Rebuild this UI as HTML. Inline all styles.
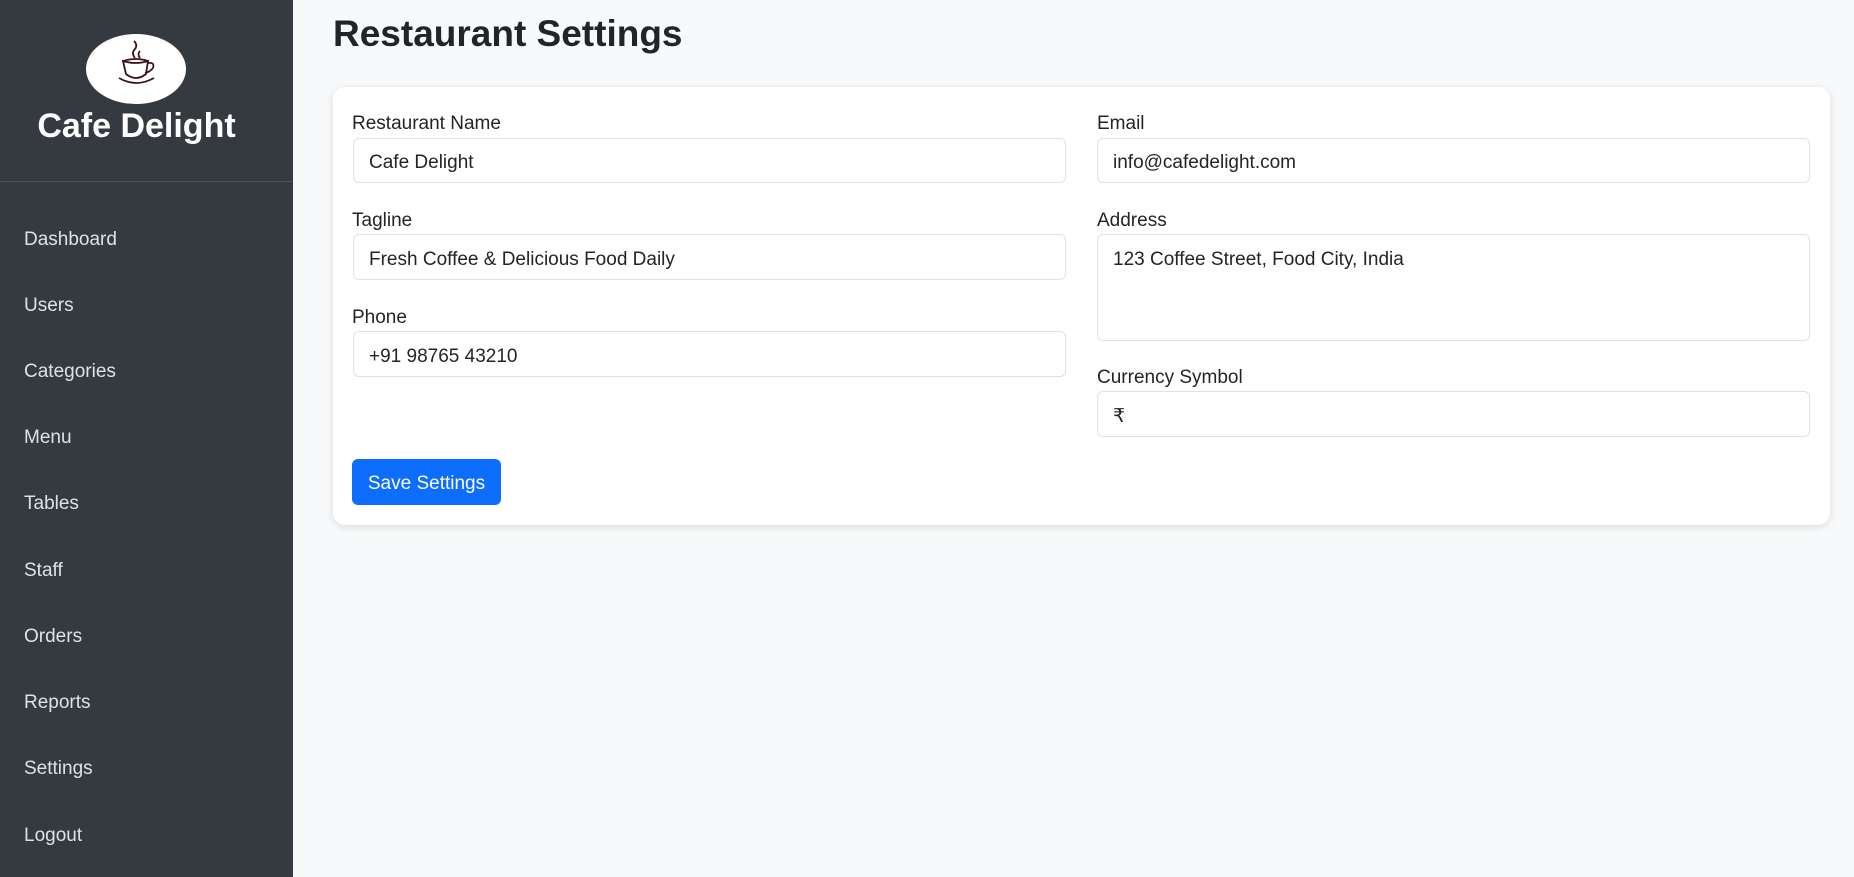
<!DOCTYPE html>
<html><head><meta charset="utf-8"><style>
*{box-sizing:border-box;margin:0;padding:0}
body{width:1854px;height:877px;overflow:hidden;background:#f8f9fa;font-family:"Liberation Sans",sans-serif;color:#212529;position:relative}
.sb{position:absolute;left:0;top:0;width:293px;height:877px;background:#343a40}
.brand{position:absolute;top:107px;left:0;width:273px;text-align:center;color:#fff;font-size:34px;font-weight:bold}
.div{position:absolute;top:181px;left:0;width:293px;height:1px;background:#4b5157}
.nav{position:absolute;left:24px;color:#dee2e6;font-size:19px;transform:translateY(-50%)}
h1{position:absolute;left:333px;top:13px;font-size:37px;font-weight:bold}
.card{position:absolute;left:333px;top:87px;width:1497px;height:438px;background:#fff;border-radius:12px;box-shadow:0 2px 8px rgba(0,0,0,.12)}
.lbl{position:absolute;font-size:19px;transform:translateY(-50%);margin-top:1px}
.in{position:absolute;border:1px solid #dee2e6;border-radius:6px;background:#fff;font-size:19px;padding:5px 15px 0;display:flex;align-items:center}
.ta{align-items:flex-start;padding-top:14px}
.btn{position:absolute;left:352px;top:459px;width:149px;height:46px;background:#0d6efd;color:#fff;border-radius:6px;font-size:19px;display:flex;align-items:center;justify-content:center;padding-top:3px}
</style></head><body>
<div class="sb">
<svg style="position:absolute;left:86px;top:34px" width="100" height="70" viewBox="0 0 100 70">
<ellipse cx="50" cy="35" rx="50" ry="35" fill="#fff"/>
<g fill="none" stroke="#3a1418" stroke-width="1.8">
<path d="M37 27 Q50 31 62 27 L60 40 Q50 48 40 40 Z"/>
<path d="M37 27 Q50 23 62 27"/>
<path d="M62 29 Q69 28 67 34 Q64 38 59 39"/>
<path d="M33 44 Q50 54 68 44"/>
<path d="M49 24 Q45 19 49 15 Q52 11 48 7"/>
<path d="M54 24 Q51 20 54 17"/>
</g></svg>
<div class="brand">Cafe Delight</div>
<div class="div"></div>
<div class="nav" style="top:240px">Dashboard</div>
<div class="nav" style="top:306px">Users</div>
<div class="nav" style="top:372px">Categories</div>
<div class="nav" style="top:438px">Menu</div>
<div class="nav" style="top:504px">Tables</div>
<div class="nav" style="top:571px">Staff</div>
<div class="nav" style="top:637px">Orders</div>
<div class="nav" style="top:703px">Reports</div>
<div class="nav" style="top:769px">Settings</div>
<div class="nav" style="top:836px">Logout</div>
</div>
<h1>Restaurant Settings</h1>
<div class="card"></div>
<div class="lbl" style="left:352px;top:123px">Restaurant Name</div>
<div class="in" style="left:353px;top:138px;width:713px;height:45px">Cafe Delight</div>
<div class="lbl" style="left:352px;top:220px">Tagline</div>
<div class="in" style="left:353px;top:234px;width:713px;height:46px">Fresh Coffee &amp; Delicious Food Daily</div>
<div class="lbl" style="left:352px;top:317px">Phone</div>
<div class="in" style="left:353px;top:331px;width:713px;height:46px">+91 98765 43210</div>
<div class="lbl" style="left:1097px;top:123px">Email</div>
<div class="in" style="left:1097px;top:138px;width:713px;height:45px">info@cafedelight.com</div>
<div class="lbl" style="left:1097px;top:220px">Address</div>
<div class="in ta" style="left:1097px;top:234px;width:713px;height:107px">123 Coffee Street, Food City, India</div>
<div class="lbl" style="left:1097px;top:377px">Currency Symbol</div>
<div class="in" style="left:1097px;top:391px;width:713px;height:46px">₹</div>
<div class="btn">Save Settings</div>
</body></html>
